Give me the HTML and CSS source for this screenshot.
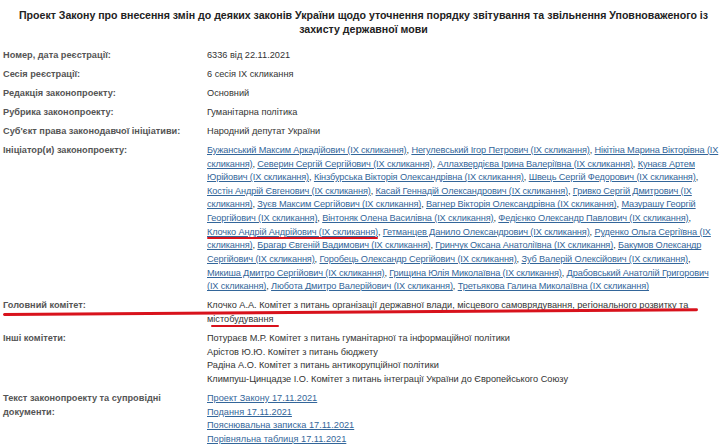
FILE: index.html
```html
<!DOCTYPE html>
<html lang="uk">
<head>
<meta charset="utf-8">
<title>Проект Закону 6336</title>
<link rel="stylesheet" href="styles.css">
</head>
<body>
<div class="page">
  <h1 class="title">Проект Закону про внесення змін до деяких законів України щодо уточнення порядку звітування та звільнення Уповноваженого із захисту державної мови</h1>
  <div class="rows">
    <div class="row"><div class="label">Номер, дата реєстрації:</div><div class="value">6336 від 22.11.2021</div></div>
    <div class="row"><div class="label">Сесія реєстрації:</div><div class="value">6 сесія IX скликання</div></div>
    <div class="row"><div class="label">Редакція законопроекту:</div><div class="value">Основний</div></div>
    <div class="row"><div class="label">Рубрика законопроекту:</div><div class="value">Гуманітарна політика</div></div>
    <div class="row"><div class="label">Суб'єкт права законодавчої ініціативи:</div><div class="value">Народний депутат України</div></div>
    <div class="row"><div class="label">Ініціатор(и) законопроекту:</div><div class="value people"><a href="#">Бужанський Максим Аркадійович (IX скликання)</a>, <a href="#">Негулевський Ігор Петрович (IX скликання)</a>, <a href="#">Нікітіна Марина Вікторівна (IX скликання)</a>, <a href="#">Северин Сергій Сергійович (IX скликання)</a>, <a href="#">Аллахвердієва Ірина Валеріївна (IX скликання)</a>, <a href="#">Кунаєв Артем Юрійович (IX скликання)</a>, <a href="#">Кінзбурська Вікторія Олександрівна (IX скликання)</a>, <a href="#">Швець Сергій Федорович (IX скликання)</a>, <a href="#">Костін Андрій Євгенович (IX скликання)</a>, <a href="#">Касай Геннадій Олександрович (IX скликання)</a>, <a href="#">Гривко Сергій Дмитрович (IX скликання)</a>, <a href="#">Зуєв Максим Сергійович (IX скликання)</a>, <a href="#">Вагнер Вікторія Олександрівна (IX скликання)</a>, <a href="#">Мазурашу Георгій Георгійович (IX скликання)</a>, <a href="#">Вінтоняк Олена Василівна (IX скликання)</a>, <a href="#">Федієнко Олександр Павлович (IX скликання)</a>, <a href="#" class="hl">Клочко Андрій Андрійович (IX скликання)</a>, <a href="#">Гетманцев Данило Олександрович (IX скликання)</a>, <a href="#">Руденко Ольга Сергіївна (IX скликання)</a>, <a href="#">Брагар Євгеній Вадимович (IX скликання)</a>, <a href="#">Гринчук Оксана Анатоліївна (IX скликання)</a>, <a href="#">Бакумов Олександр Сергійович (IX скликання)</a>, <a href="#">Горобець Олександр Сергійович (IX скликання)</a>, <a href="#">Зуб Валерій Олексійович (IX скликання)</a>, <a href="#">Микиша Дмитро Сергійович (IX скликання)</a>, <a href="#">Грищина Юлія Миколаївна (IX скликання)</a>, <a href="#">Драбовський Анатолій Григорович (IX&nbsp;скликання)</a>, <a href="#">Любота Дмитро Валерійович (IX скликання)</a>, <a href="#">Третьякова Галина Миколаївна (IX скликання)</a></div></div>
    <div class="row main"><div class="label">Головний комітет:</div><div class="value">Клочко А.А. Комітет з питань організації державної влади, місцевого самоврядування, регіонального розвитку та <span class="hl short">містобудування</span></div></div>
    <div class="row"><div class="label">Інші комітети:</div><div class="value list"><span>Потураєв М.Р. Комітет з питань гуманітарної та інформаційної політики</span><span>Арістов Ю.Ю. Комітет з питань бюджету</span><span>Радіна А.О. Комітет з питань антикорупційної політики</span><span>Климпуш-Цинцадзе І.О. Комітет з питань інтеграції України до Європейського Союзу</span></div></div>
    <div class="row"><div class="label">Текст законопроекту та супровідні документи:</div><div class="value list"><a href="#">Проект Закону 17.11.2021</a><a href="#">Подання 17.11.2021</a><a href="#">Пояснювальна записка 17.11.2021</a><a href="#">Порівняльна таблиця 17.11.2021</a></div></div>
  </div>
</div>
</body>
</html>
```

FILE: styles.css
```css
html, body {
  margin: 0;
  padding: 0;
  background: #ffffff;
}
body {
  font-family: "Liberation Sans", Arial, sans-serif;
  font-size: 9.2px;
  line-height: 13.66px;
  color: #333333;
}
.page {
  position: relative;
  width: 727px;
  height: 446px;
  overflow: hidden;
}
.title {
  margin: 8px 6px 0;
  font-size: 10.6px;
  line-height: 14px;
  font-weight: bold;
  text-align: center;
  color: #222222;
}
.rows {
  margin-top: 10px;
  padding: 0 4px 0 3px;
}
.row {
  display: grid;
  grid-template-columns: 204px 1fr;
  padding: 2.7px 0;
}
.label {
  font-weight: bold;
  color: #555555;
  padding-right: 10px;
}
.value a {
  color: #33669a;
  text-decoration: underline;
}
.people {
  letter-spacing: -0.13px;
}
.list {
  display: flex;
  flex-direction: column;
  align-items: flex-start;
}
.hl {
  position: relative;
  white-space: nowrap;
}
.hl::after {
  content: "";
  position: absolute;
  left: 0;
  right: 0;
  bottom: -2.5px;
  height: 2.6px;
  border-radius: 2px;
  background: #d8121c;
}
.hl.short::after {
  left: 4px;
  right: -6px;
  bottom: -3px;
}
.main {
  position: relative;
}
.main::after {
  content: "";
  position: absolute;
  left: 0;
  top: 16px;
  width: 695px;
  height: 2.6px;
  border-radius: 2px;
  background: #d8121c;
  transform-origin: left center;
  transform: rotate(-0.4deg);
}
```
